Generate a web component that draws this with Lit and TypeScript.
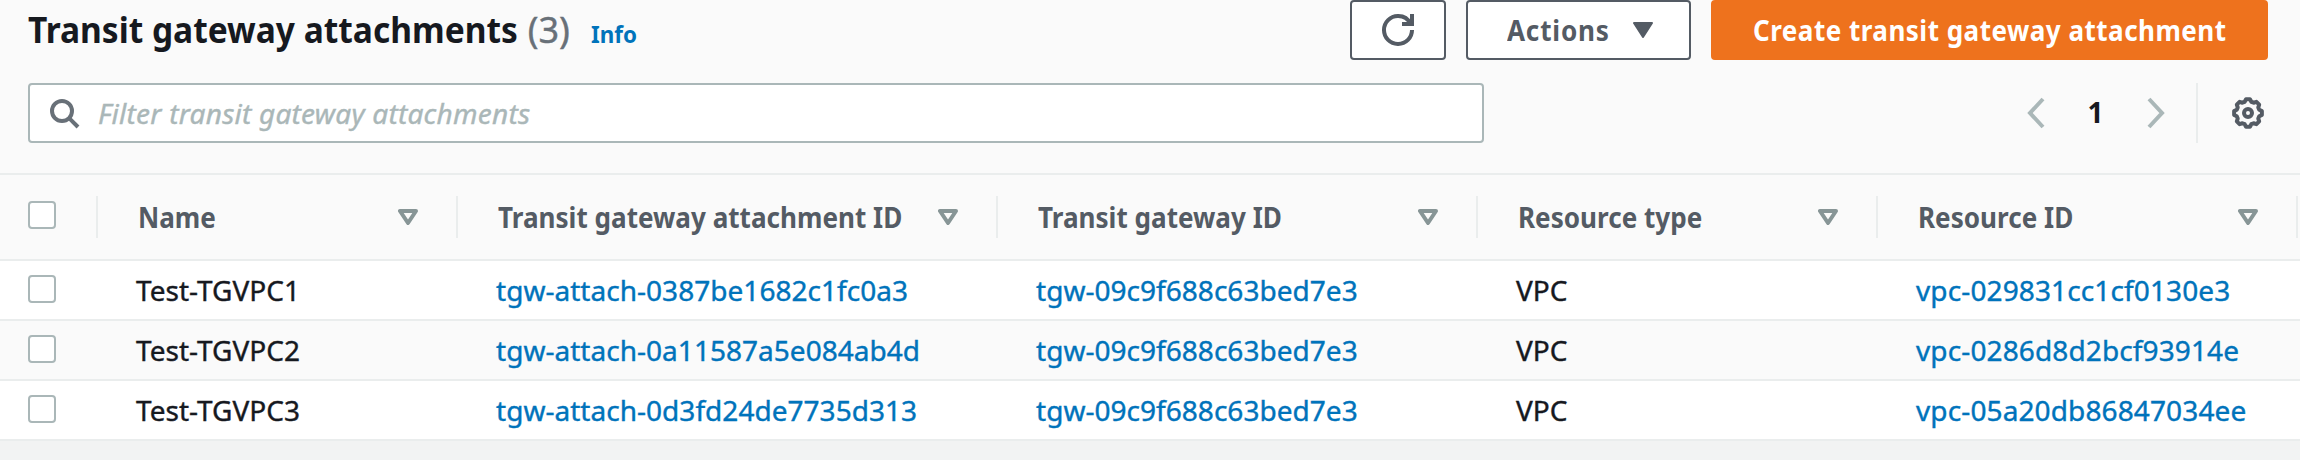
import { LitElement, html, css, svg } from "lit";
import { customElement, state } from "lit/decorators.js";

interface Attachment {
  name: string;
  attachmentId: string;
  gatewayId: string;
  resourceType: string;
  resourceId: string;
}

const gearPath = (): string => {
  const at = (deg: number, r: number) => {
    const a = (deg * Math.PI) / 180;
    return `${(8 + r * Math.sin(a)).toFixed(2)} ${(8 - r * Math.cos(a)).toFixed(2)}`;
  };
  const points: string[] = [];
  for (let k = 0; k < 8; k++) {
    points.push(at(k * 45 - 8, 7), at(k * 45 + 8, 7), at(k * 45 + 16.5, 5.85), at(k * 45 + 28.5, 5.85));
  }
  return `M${points.join("L")}Z`;
};

const icons = {
  refresh: svg`<path d="M10 5h5V0"/><path d="M15 8a6.957 6.957 0 0 1-7 7 6.957 6.957 0 0 1-7-7 6.957 6.957 0 0 1 7-7 6.87 6.87 0 0 1 6.3 4"/>`,
  search: svg`<circle cx="7" cy="7" r="5"/><path d="M10.8 10.8 15 15"/>`,
  prev: svg`<path d="M11.5 1 5 8l6.500 7"/>`,
  next: svg`<path d="M4.500 1 11 8l-6.500 7"/>`,
  gear: svg`<circle cx="8" cy="8" r="2"/><path d=${gearPath()} stroke-linejoin="round"/>`,
};

@customElement("tgw-icon")
class TgwIcon extends LitElement {
  static properties = { name: {} };
  declare name: keyof typeof icons;
  static styles = css`
    :host { display: block; width: 32px; height: 32px; flex: none; }
    svg { display: block; width: 100%; height: 100%; fill: none; stroke: currentColor; stroke-width: 2; }
  `;
  render() {
    return html`<svg viewBox="0 0 16 16">${icons[this.name]}</svg>`;
  }
}

@customElement("app-root")
class AppRoot extends LitElement {
  @state() private columns = ["Name", "Transit gateway attachment ID", "Transit gateway ID", "Resource type", "Resource ID"];

  @state() private rows: Attachment[] = [
    { name: "Test-TGVPC1", attachmentId: "tgw-attach-0387be1682c1fc0a3", gatewayId: "tgw-09c9f688c63bed7e3", resourceType: "VPC", resourceId: "vpc-029831cc1cf0130e3" },
    { name: "Test-TGVPC2", attachmentId: "tgw-attach-0a11587a5e084ab4d", gatewayId: "tgw-09c9f688c63bed7e3", resourceType: "VPC", resourceId: "vpc-0286d8d2bcf93914e" },
    { name: "Test-TGVPC3", attachmentId: "tgw-attach-0d3fd24de7735d313", gatewayId: "tgw-09c9f688c63bed7e3", resourceType: "VPC", resourceId: "vpc-05a20db86847034ee" },
  ];

  static styles = css`
    * { box-sizing: border-box; }
    :host {
      display: block; height: 460px; overflow: hidden; background: #f2f3f3;
      font: 28px/40px "Noto Sans", sans-serif; color: #16191f; white-space: nowrap;
    }
    a { color: #0073bb; text-decoration: none; }
    .panel { background: #fafafa; }
    .narrow { display: inline-block; transform: scaleX(0.933); transform-origin: left; font-weight: 700; }

    .heading { display: flex; justify-content: space-between; height: 60px; padding: 0 32px 0 28px; }
    .title { display: flex; align-items: baseline; height: 60px; line-height: 60px; }
    .title h1 { margin: 0 -26.500px 0 0; font-size: 36px; transform: scaleX(0.931); }
    .count { font-size: 36px; color: #687078; -webkit-text-stroke: 0.4px; }
    .info { margin-left: 21px; font-size: 24px; }
    .actions { display: flex; gap: 20px; }
    .btn {
      display: flex; align-items: center; height: 60px; padding: 0 39px; border: 2px solid #545b64;
      border-radius: 4px; background: #fff; color: #545b64; font: inherit; letter-spacing: 0.5px;
    }
    .btn .narrow { margin-top: -1px; }
    .refresh { width: 96px; padding: 0 30px; }
    .menu { width: 225px; justify-content: space-between; padding-right: 36px; }
    .menu .narrow { letter-spacing: 0.85px; }
    .caret { display: block; width: 20px; height: 16px; fill: #545b64; stroke: #545b64; stroke-width: 2; stroke-linejoin: round; }
    .primary { width: 557px; padding: 0 40px; border-color: #ee721d; background: #ee721d; color: #fff; }
    .primary .narrow { transform: scaleX(0.931); }

    .tools { display: flex; justify-content: space-between; padding: 23px 36px 30px 28px; }
    .search {
      display: flex; align-items: center; width: 1456px; height: 60px; padding-left: 18px;
      border: 2px solid #aab7b8; border-radius: 4px; background: #fff; color: #687078;
    }
    .placeholder { margin-left: 18px; font-style: italic; color: #aab7b8; letter-spacing: 0.24px; -webkit-text-stroke: 0.4px; }
    .pager { display: flex; align-items: center; height: 60px; color: #aab7b8; }
    .page { margin: -2px 35px 0 34px; width: 19px; text-align: center; font-weight: 700; color: #16191f; }
    .rule { width: 2px; height: 60px; margin: 0 34px 0 24px; background: #eaeded; }
    .gear { color: #545b64; }

    .row { display: grid; grid-template-columns: 98px 360px 540px 480px 400px 420px; align-items: center; height: 60px; border-bottom: 2px solid #eaeded; background: #fff; }
    .row:nth-child(odd) { background: #fafafa; }
    .head { height: 88px; border-top: 2px solid #eaeded; color: #545b64; }
    .cell { padding-left: 38px; letter-spacing: 0.03px; -webkit-text-stroke: 0.4px; }
    .cell:last-child { letter-spacing: 0.12px; }
    .th { display: flex; align-items: center; justify-content: space-between; height: 42px; padding: 0 38px 0 39.500px; border-right: 2px solid #eaeded; }
    .th .narrow { margin: -1px -30px 0 0; transform: scaleX(0.932); }
    .pick { display: flex; align-items: center; height: 42px; padding: 0 0 2px 28px; }
    .head .pick { padding-bottom: 4px; border-right: 2px solid #eaeded; }
    .box { width: 28px; height: 28px; border: 2px solid #aab7b8; border-radius: 4px; background: #fff; }
    .sort { display: block; flex: none; width: 20px; height: 16px; fill: none; stroke: #879596; stroke-width: 4; stroke-linejoin: round; }
  `;

  render() {
    return html`
      <section class="panel">
        <header class="heading">
          <div class="title">
            <h1 class="narrow">Transit gateway attachments</h1>
            <span class="count">(3)</span>
            <a class="info narrow">Info</a>
          </div>
          <div class="actions">
            <button class="btn refresh" aria-label="Refresh"><tgw-icon name="refresh"></tgw-icon></button>
            <button class="btn menu">
              <span class="narrow">Actions</span>
              <svg class="caret" viewBox="0 0 20 16"><path d="M1 1h18l-9 14z" /></svg>
            </button>
            <button class="btn primary"><span class="narrow">Create transit gateway attachment</span></button>
          </div>
        </header>
        <div class="tools">
          <div class="search"><tgw-icon name="search"></tgw-icon><span class="placeholder">Filter transit gateway attachments</span></div>
          <div class="pager">
            <tgw-icon name="prev"></tgw-icon>
            <span class="page">1</span>
            <tgw-icon name="next"></tgw-icon>
            <span class="rule"></span>
            <tgw-icon class="gear" name="gear"></tgw-icon>
          </div>
        </div>
        <div class="table">
          <div class="row head">
            <div class="pick"><span class="box"></span></div>
            ${this.columns.map(
              (label) => html`<div class="th">
                <span class="narrow">${label}</span>
                <svg class="sort" viewBox="0 0 20 16"><path d="M2 2h16l-8 12z" /></svg>
              </div>`
            )}
          </div>
          ${this.rows.map(
            (r) => html`<div class="row">
              <div class="pick"><span class="box"></span></div>
              <div class="cell">${r.name}</div>
              <div class="cell"><a>${r.attachmentId}</a></div>
              <div class="cell"><a>${r.gatewayId}</a></div>
              <div class="cell">${r.resourceType}</div>
              <div class="cell"><a>${r.resourceId}</a></div>
            </div>`
          )}
        </div>
      </section>
    `;
  }
}
